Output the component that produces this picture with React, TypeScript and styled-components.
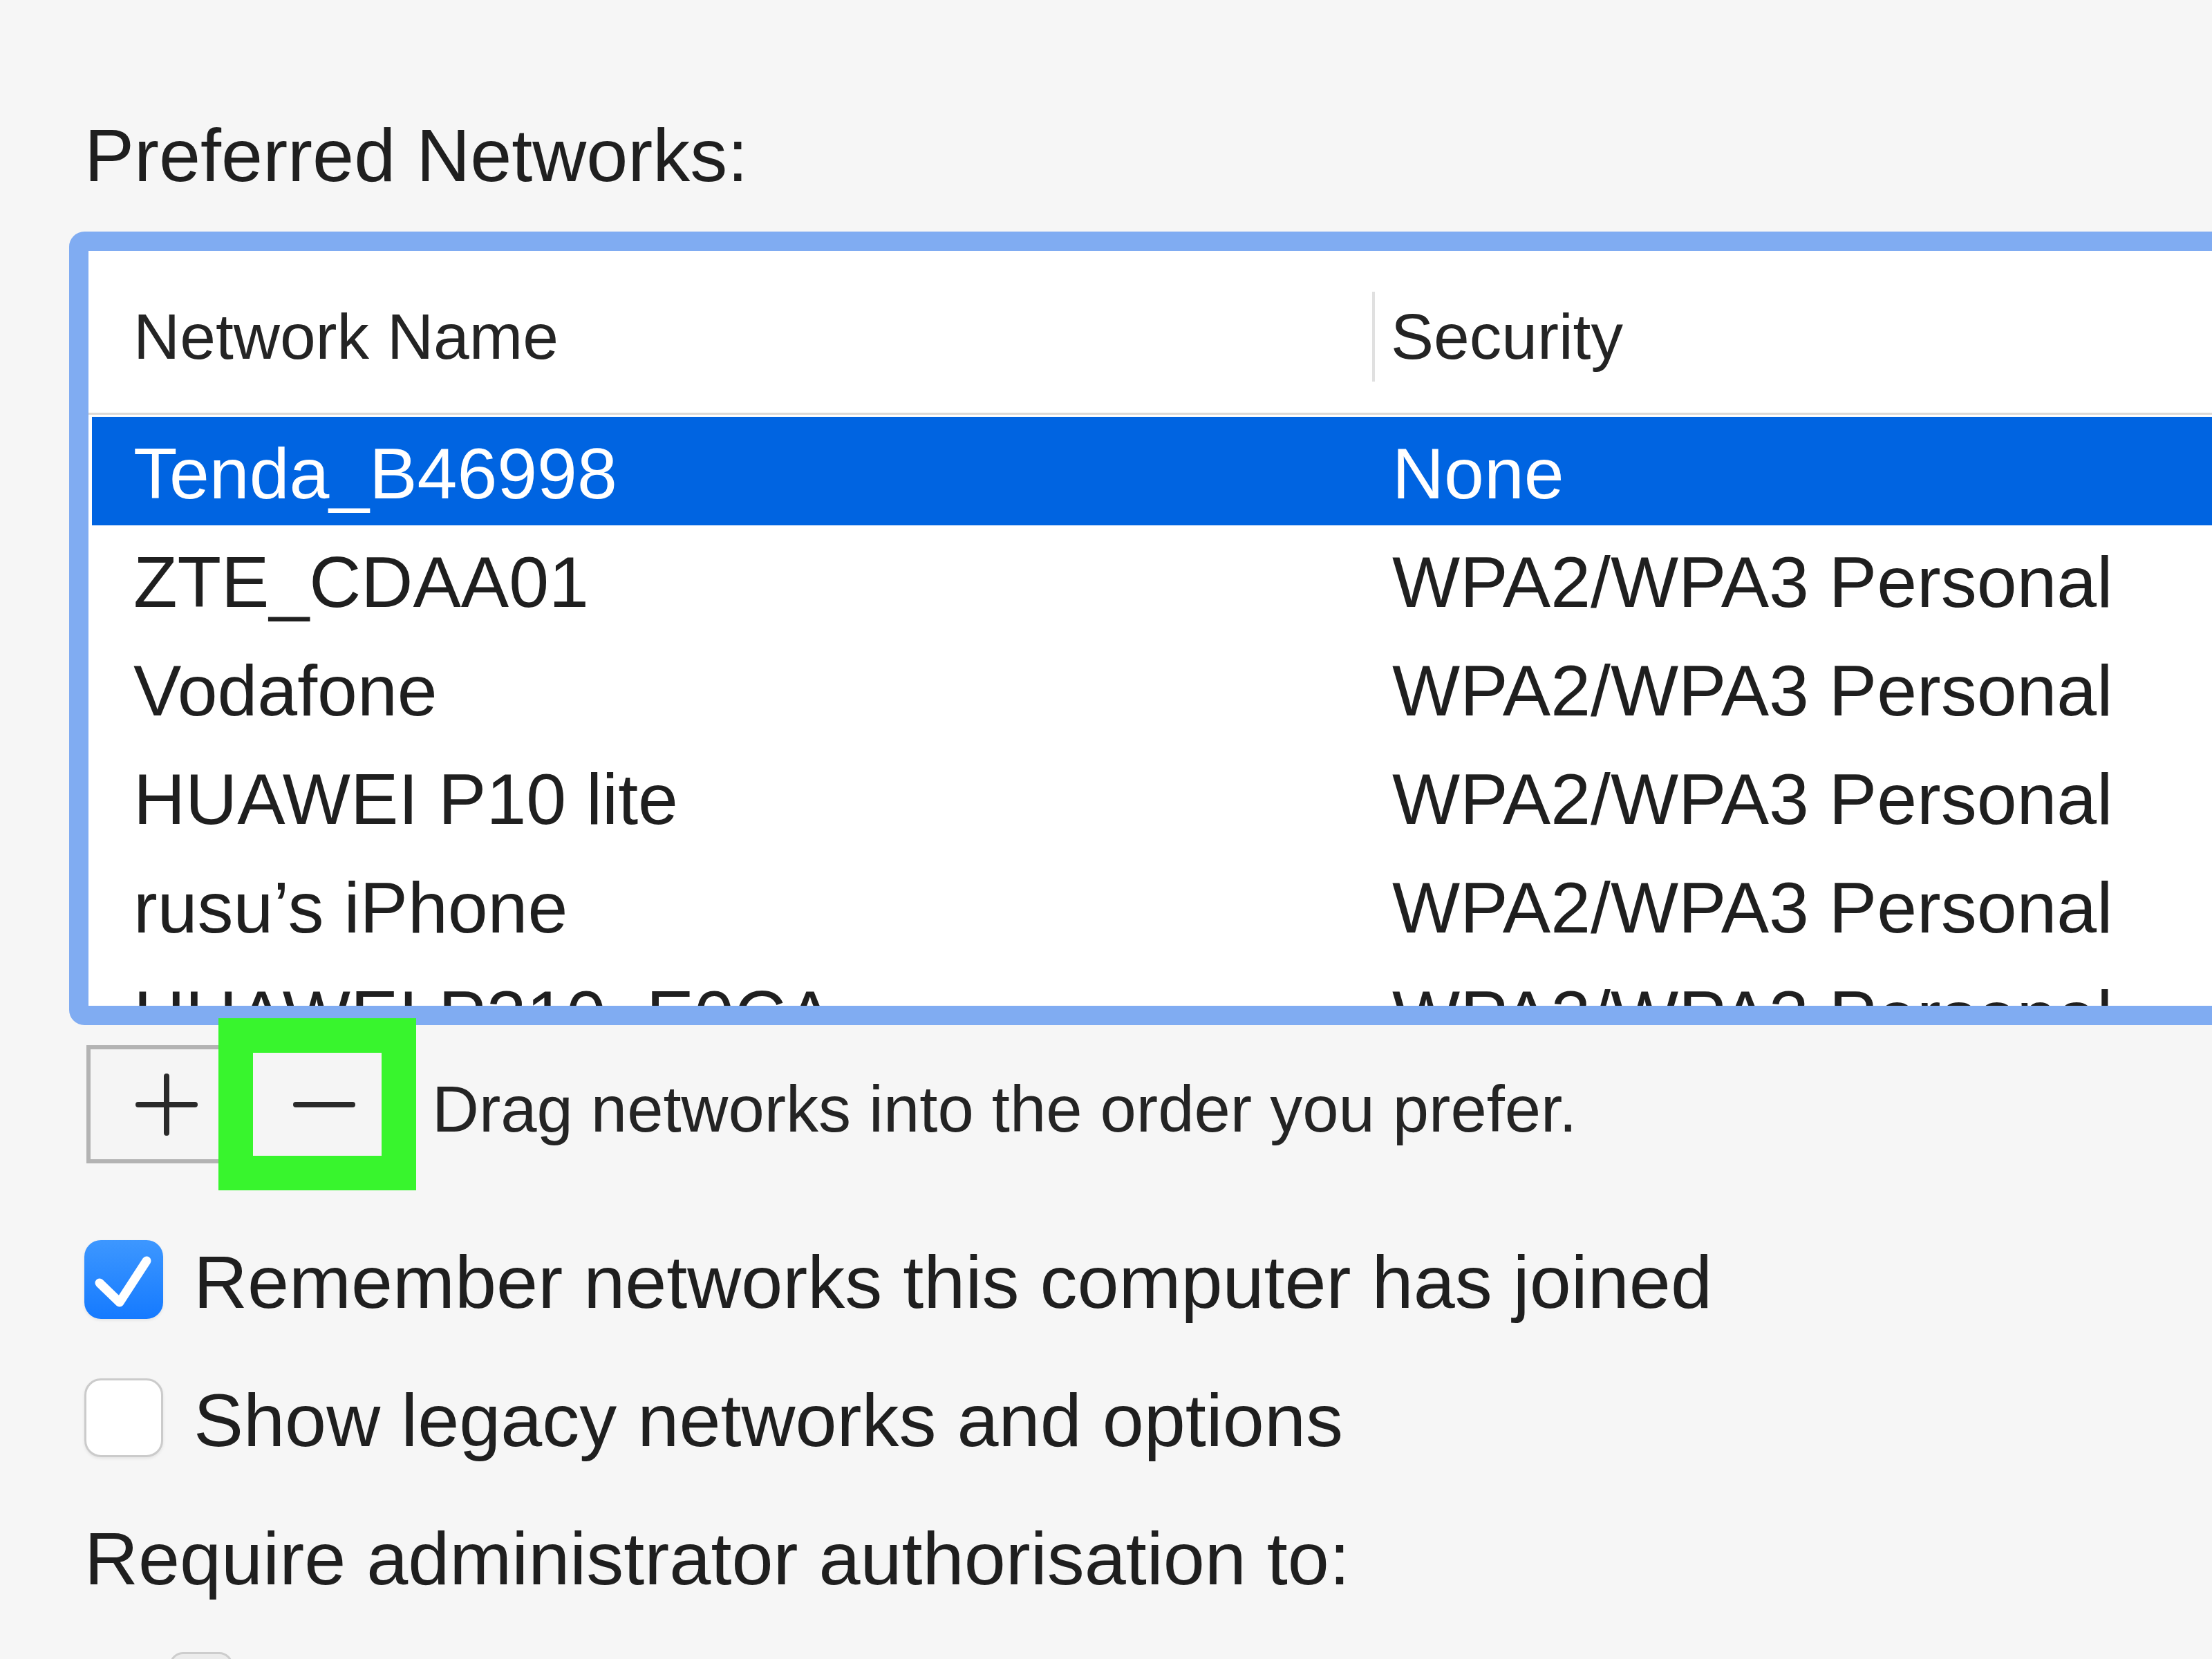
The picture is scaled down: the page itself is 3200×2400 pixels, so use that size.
import React from "react";
import styled, { createGlobalStyle } from "styled-components";

const GlobalStyle = createGlobalStyle`
  html, body {
    margin: 0;
    padding: 0;
    background: #f6f6f6;
  }
  body {
    font-family: "Liberation Sans", Arial, sans-serif;
    color: #1f1f1f;
  }
`;

const Page = styled.div`
  width: 3200px;
  height: 2400px;
  overflow: hidden;
  box-sizing: border-box;
  padding: 160px 0 0 122px;
  background: #f6f6f6;
  display: flex;
  flex-direction: column;
  align-items: flex-start;
`;

const Heading = styled.div<{ $top?: number }>`
  font-size: 108px;
  line-height: 130px;
  color: #1f1f1f;
  white-space: nowrap;
  margin-top: ${(p) => p.$top ?? 0}px;
`;

const TableFrame = styled.div`
  flex-shrink: 0;
  margin: 45px 0 0 -22px;
  width: 3200px;
  height: 1092px;
  border: 28px solid #80acf2;
  border-radius: 22px;
  background: #ffffff;
  overflow: hidden;
`;

const HeaderRow = styled.div`
  height: 220px;
  padding-top: 14px;
  border-bottom: 3px solid #dcd9d5;
  display: grid;
  grid-template-columns: 1857px 1fr;
  align-items: center;
`;

const HeaderCell = styled.div<{ $divider?: boolean }>`
  height: 130px;
  line-height: 130px;
  font-size: 93px;
  color: #242424;
  white-space: nowrap;
  padding-left: ${(p) => (p.$divider ? 23 : 65)}px;
  border-left: ${(p) => (p.$divider ? "4px solid #e0e0e0" : "none")};
`;

const Body = styled.div`
  padding: 3px 0 0 5px;
`;

const Row = styled.div<{ $selected?: boolean }>`
  height: 157px;
  box-sizing: border-box;
  padding-top: 8px;
  display: grid;
  grid-template-columns: 1881px 1fr;
  font-size: 104px;
  line-height: 148px;
  white-space: nowrap;
  background: ${(p) => (p.$selected ? "#0064e1" : "transparent")};
  color: ${(p) => (p.$selected ? "#ffffff" : "#1f1f1f")};
`;

const Cell = styled.div<{ $first?: boolean }>`
  padding-left: ${(p) => (p.$first ? 60 : 0)}px;
  overflow: hidden;
`;

const Toolbar = styled.div`
  position: relative;
  margin: 29px 0 0 3px;
  display: flex;
  align-items: center;
`;

const ButtonGroup = styled.div`
  display: flex;
  height: 159px;
  border: 6px solid #b3b3b3;
  background: #f5f5f5;
`;

const ToolButton = styled.div<{ $w: number }>`
  width: ${(p) => p.$w}px;
  display: flex;
  align-items: center;
  justify-content: center;
`;

const Hint = styled.div`
  margin-left: 32px;
  padding-top: 14px;
  font-size: 94px;
  line-height: 120px;
  color: #242424;
  white-space: nowrap;
`;

const Highlight = styled.div`
  position: absolute;
  left: 191px;
  top: -39px;
  width: 286px;
  height: 249px;
  box-sizing: border-box;
  border: 50px solid #38f52d;
`;

const Options = styled.div`
  margin-top: 111px;
  display: flex;
  flex-direction: column;
  gap: 86px;
`;

const OptionRow = styled.div`
  display: flex;
  align-items: center;
  gap: 44px;
  height: 114px;
`;

const Box = styled.div<{ $checked?: boolean }>`
  width: 114px;
  height: 114px;
  box-sizing: border-box;
  border-radius: 24px;
  flex-shrink: 0;
  display: flex;
  align-items: center;
  justify-content: center;
  background: ${(p) =>
    p.$checked ? "linear-gradient(#3d97ff, #157aff)" : "#ffffff"};
  border: ${(p) => (p.$checked ? "none" : "3px solid #cbcbcb")};
  box-shadow: 0 2px 4px rgba(0, 0, 0, 0.08);
`;

const OptionLabel = styled.div`
  font-size: 108px;
  line-height: 114px;
  padding-top: 8px;
  color: #1f1f1f;
  white-space: nowrap;
`;

const SubBox = styled.div`
  margin: 70px 0 0 123px;
  width: 92px;
  height: 92px;
  flex-shrink: 0;
  box-sizing: border-box;
  border: 3px solid #cdcdcd;
  border-radius: 20px;
  background: #ececec;
`;

const networks: [string, string][] = [
  ["Tenda_B46998", "None"],
  ["ZTE_CDAA01", "WPA2/WPA3 Personal"],
  ["Vodafone", "WPA2/WPA3 Personal"],
  ["HUAWEI P10 lite", "WPA2/WPA3 Personal"],
  ["rusu\u2019s iPhone", "WPA2/WPA3 Personal"],
  ["HUAWEI P210_E0CA", "WPA2/WPA3 Personal"],
];

function PlusIcon() {
  return (
    <svg width="90" height="90" viewBox="0 0 90 90">
      <path d="M4 45H86M45 4V86" stroke="#2a2a2a" strokeWidth="8" strokeLinecap="round" />
    </svg>
  );
}

function MinusIcon() {
  return (
    <svg width="90" height="20" viewBox="0 0 90 20">
      <path d="M4 10H86" stroke="#2a2a2a" strokeWidth="8" strokeLinecap="round" />
    </svg>
  );
}

function CheckMark() {
  return (
    <svg width="114" height="114" viewBox="0 0 114 114">
      <path
        d="M22 62L51 90L90 30"
        fill="none"
        stroke="#ffffff"
        strokeWidth="13"
        strokeLinecap="round"
        strokeLinejoin="round"
      />
    </svg>
  );
}

export default function App() {
  return (
    <>
      <GlobalStyle />
      <Page>
        <Heading>Preferred Networks:</Heading>
        <TableFrame>
          <HeaderRow>
            <HeaderCell>Network Name</HeaderCell>
            <HeaderCell $divider>Security</HeaderCell>
          </HeaderRow>
          <Body>
            {networks.map(([name, security], i) => (
              <Row key={name} $selected={i === 0}>
                <Cell $first>{name}</Cell>
                <Cell>{security}</Cell>
              </Row>
            ))}
          </Body>
        </TableFrame>
        <Toolbar>
          <ButtonGroup>
            <ToolButton $w={220}>
              <PlusIcon />
            </ToolButton>
            <ToolButton $w={236}>
              <MinusIcon />
            </ToolButton>
          </ButtonGroup>
          <Hint>Drag networks into the order you prefer.</Hint>
          <Highlight />
        </Toolbar>
        <Options>
          <OptionRow>
            <Box $checked>
              <CheckMark />
            </Box>
            <OptionLabel>Remember networks this computer has joined</OptionLabel>
          </OptionRow>
          <OptionRow>
            <Box />
            <OptionLabel>Show legacy networks and options</OptionLabel>
          </OptionRow>
        </Options>
        <Heading $top={82}>Require administrator authorisation to:</Heading>
        <SubBox />
      </Page>
    </>
  );
}
